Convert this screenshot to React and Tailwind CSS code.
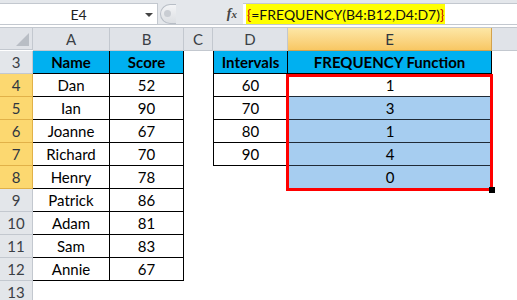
import React from "react";

const rows = [
  { n: 4, a: "Dan", b: "52", d: "60", e: "1" },
  { n: 5, a: "Ian", b: "90", d: "70", e: "3" },
  { n: 6, a: "Joanne", b: "67", d: "80", e: "1" },
  { n: 7, a: "Richard", b: "70", d: "90", e: "4" },
  { n: 8, a: "Henry", b: "78", e: "0" },
  { n: 9, a: "Patrick", b: "86" },
  { n: 10, a: "Adam", b: "81" },
  { n: 11, a: "Sam", b: "83" },
  { n: 12, a: "Annie", b: "67" },
];

function RowHead({ n, selected }) {
  return (
    <div
      className={
        selected
          ? "flex items-center justify-center border-b border-r border-[#e1b148] bg-[#fcd870] text-[#2f3640]"
          : "flex items-center justify-center border-b border-r border-[#c3c8cf] bg-[#e3e6ea] text-[#3b3f45]"
      }
    >
      {n}
    </div>
  );
}

function ColHead({ label, selected }) {
  return (
    <div
      className={
        selected
          ? "flex items-center justify-center border-b border-r border-[#d3a24c] bg-gradient-to-b from-[#fde7a6] to-[#f8c763] text-[#2f3640]"
          : "flex items-center justify-center border-b border-r border-[#c3c8cf] bg-[#e0e3e8] text-[#3b3f45]"
      }
    >
      {label}
    </div>
  );
}

export default function App() {
  return (
    <div
      className="h-[300px] w-[517px] overflow-hidden bg-white text-[15px] text-black"
      style={{ fontFamily: "Lato, 'Open Sans', sans-serif" }}
    >
      {/* Formula bar */}
      <div className="flex h-[25px] items-stretch border-b border-[#c3c8cf] bg-[#e4e7eb] pt-[3px]">
        <div className="relative flex w-[158px] items-center justify-center border-r border-t border-[#c3c8cf] bg-white text-[14px] text-[#222]">
          E4
          <span className="absolute right-[4px] top-[9px] h-0 w-0 border-l-[4px] border-r-[4px] border-t-[4px] border-l-transparent border-r-transparent border-t-[#444]" />
        </div>
        <div className="flex w-[85px] items-center">
          <div className="ml-[2px] flex h-[20px] w-[16px] items-center rounded-l-full border border-r-0 border-[#b8bec6] bg-gradient-to-b from-[#f3f4f6] to-[#dcdfe3] pl-[3px]">
            <span className="h-[7px] w-[7px] rounded-full bg-[#c9cdd3]" />
          </div>
          <span
            className="ml-auto mr-[6px] text-[14px] font-bold italic text-[#444]"
            style={{ fontFamily: "'Liberation Serif', serif" }}
          >
            f<span className="text-[11px]">x</span>
          </span>
        </div>
        <div className="flex flex-1 items-center border-t border-[#c3c8cf] bg-white pl-[3px]">
          <span className="flex h-full items-center bg-[#ffff00] pl-[1px] pr-[1px] text-[14px] text-[#111]">
            <span className="text-[#c00000]">{"{"}</span>=FREQUENCY(B4:B12,D4:D7)<span className="text-[#c00000]">{"}"}</span>
          </span>
        </div>
      </div>
      <div className="h-[3px] border-b border-[#c3c8cf] bg-white" />

      {/* Sheet */}
      <div className="relative">
        <div className="grid grid-cols-[33px_77px_74px_29px_75px_204px_25px] auto-rows-[23px]">
          {/* column headers */}
          <div className="relative h-[22px] border-b border-r border-[#c3c8cf] bg-[#e0e3e8]">
            <span className="absolute bottom-[3px] right-[3px] h-0 w-0 border-b-[13px] border-l-[13px] border-b-[#b9bec5] border-l-transparent" />
          </div>
          <ColHead label="A" />
          <ColHead label="B" />
          <ColHead label="C" />
          <ColHead label="D" />
          <ColHead label="E" selected />
          <div className="border-b border-[#c3c8cf] bg-[#e0e3e8]" />

          {/* row 3 */}
          <RowHead n={3} />
          <div className="flex items-center justify-center border-b border-r border-black bg-[#00b0f0] font-bold">Name</div>
          <div className="flex items-center justify-center border-b border-r border-black bg-[#00b0f0] font-bold">Score</div>
          <div />
          <div className="flex items-center justify-center border-b border-l border-r border-black bg-[#00b0f0] font-bold">Intervals</div>
          <div className="flex items-center justify-center border-b border-r border-black bg-[#00b0f0] font-bold">FREQUENCY Function</div>
          <div />

          {rows.map((r) => (
            <React.Fragment key={r.n}>
              <RowHead n={r.n} selected={r.n <= 8} />
              <div className="flex items-center justify-center border-b border-r border-black">{r.a}</div>
              <div className="flex items-center justify-center border-b border-r border-black">{r.b}</div>
              <div />
              {r.d ? (
                <div className="flex items-center justify-center border-b border-l border-r border-black">{r.d}</div>
              ) : (
                <div />
              )}
              {r.e ? (
                <div
                  className={
                    r.n === 4
                      ? "flex items-center justify-center border-b border-[#1f2a36] bg-white"
                      : "flex items-center justify-center border-b border-[#1f2a36] bg-[#a6cdf0]"
                  }
                >
                  {r.e}
                </div>
              ) : (
                <div />
              )}
              <div />
            </React.Fragment>
          ))}
          <RowHead n={13} />
        </div>

        {/* selection outline */}
        <div className="pointer-events-none absolute left-[286px] top-[46px] h-[117px] w-[207px] border-[3px] border-[#ff0000]" />
        <div className="pointer-events-none absolute left-[489px] top-[159px] h-[6px] w-[6px] bg-black" />
      </div>
    </div>
  );
}
